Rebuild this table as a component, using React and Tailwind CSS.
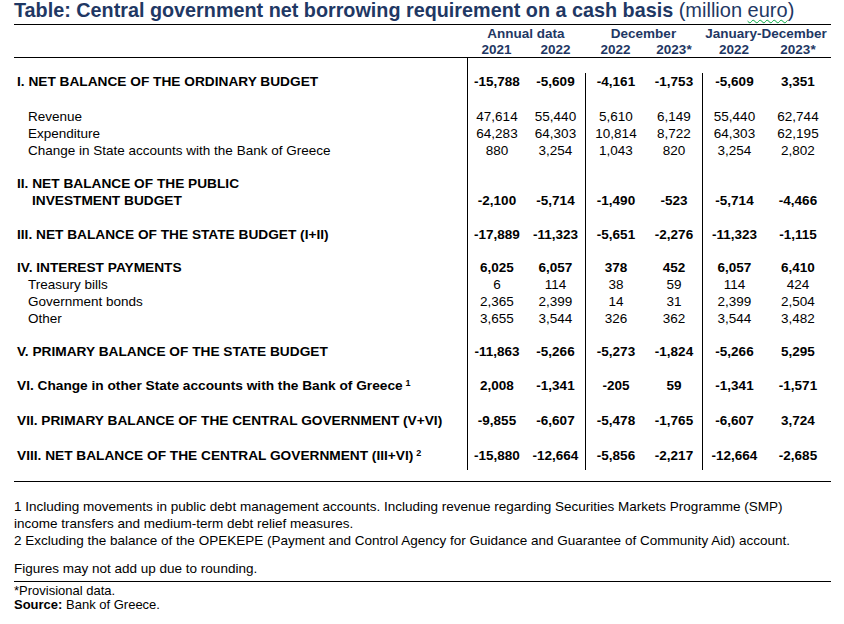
const GRID = 'grid grid-cols-[453px_59px_59px_61px_56px_64px_64px]';

const rows = [
  { label: 'I. NET BALANCE OF THE ORDINARY BUDGET', values: ['-15,788', '-5,609', '-4,161', '-1,753', '-5,609', '3,351'], bold: true, h: 'h-[17px]' },
  { label: 'Revenue', values: ['47,614', '55,440', '5,610', '6,149', '55,440', '62,744'], h: 'h-[35px]' },
  { label: 'Expenditure', values: ['64,283', '64,303', '10,814', '8,722', '64,303', '62,195'], h: 'h-[17px]' },
  { label: 'Change in State accounts with the Bank of Greece', values: ['880', '3,254', '1,043', '820', '3,254', '2,802'], h: 'h-[17px]' },
  { label: 'II. NET BALANCE OF THE PUBLIC', label2: 'INVESTMENT BUDGET', values: ['-2,100', '-5,714', '-1,490', '-523', '-5,714', '-4,466'], bold: true, h: 'h-[50px]' },
  { label: 'III. NET BALANCE OF THE STATE BUDGET (I+II)', values: ['-17,889', '-11,323', '-5,651', '-2,276', '-11,323', '-1,115'], bold: true, h: 'h-[34px]' },
  { label: 'IV. INTEREST PAYMENTS', values: ['6,025', '6,057', '378', '452', '6,057', '6,410'], bold: true, h: 'h-[33px]' },
  { label: 'Treasury bills', values: ['6', '114', '38', '59', '114', '424'], h: 'h-[17px]' },
  { label: 'Government bonds', values: ['2,365', '2,399', '14', '31', '2,399', '2,504'], h: 'h-[17px]' },
  { label: 'Other', values: ['3,655', '3,544', '326', '362', '3,544', '3,482'], h: 'h-[17px]' },
  { label: 'V. PRIMARY BALANCE OF THE STATE BUDGET', values: ['-11,863', '-5,266', '-5,273', '-1,824', '-5,266', '5,295'], bold: true, h: 'h-[33px]' },
  { label: 'VI. Change in other State accounts with the Bank of Greece', note: '1', values: ['2,008', '-1,341', '-205', '59', '-1,341', '-1,571'], bold: true, h: 'h-[34px]' },
  { label: 'VII. PRIMARY BALANCE OF THE CENTRAL GOVERNMENT (V+VI)', values: ['-9,855', '-6,607', '-5,478', '-1,765', '-6,607', '3,724'], bold: true, h: 'h-[35px]' },
  { label: 'VIII. NET BALANCE OF THE CENTRAL GOVERNMENT (III+VI)', note: '2', values: ['-15,880', '-12,664', '-5,856', '-2,217', '-12,664', '-2,685'], bold: true, h: 'h-[35px]' },
];

const Row = ({ row }) => (
  <div className={`${GRID} ${row.h} leading-[17px]`}>
    <div className={`flex flex-col justify-end ${row.bold ? 'pl-[3px] font-bold text-[13.7px]' : 'pl-[14px]'}`}>
      <div className="whitespace-nowrap">
        {row.label}
        {row.note && <sup className="ml-[3px] text-[9px] font-bold">{row.note}</sup>}
      </div>
      {row.label2 && <div className="pl-[15px] whitespace-nowrap">{row.label2}</div>}
    </div>
    {row.values.map((v, i) => (
      <div
        key={i}
        className={`flex items-end justify-center ${row.bold ? 'font-bold' : ''} ${i === 0 || i === 2 || i === 4 ? 'border-l border-black' : ''}`}
      >
        {v}
      </div>
    ))}
  </div>
);

const Spacer = ({ h, all }) => (
  <div className={`${GRID} ${h}`}>
    <div></div>
    <div className="border-l border-black"></div>
    <div></div>
    <div className={all ? 'border-l border-black' : ''}></div>
    <div></div>
    <div className={all ? 'border-l border-black' : ''}></div>
    <div></div>
  </div>
);

export default function App() {
  return (
    <div className="w-[844px] h-[624px] bg-white font-['Liberation_Sans',Arial,sans-serif] text-black overflow-hidden">
      <div className="ml-[14px] w-[817px]">
        {/* title */}
        <div className="h-[25px] border-b border-black text-[#1f3864] leading-[21px] whitespace-nowrap">
          <span className="text-[19.8px] font-bold">Table: Central government net borrowing requirement on a cash basis</span>
          <span className="text-[20px]"> (million <span className="underline decoration-wavy decoration-green-600 decoration-1 underline-offset-2">euro</span>)</span>
        </div>

        {/* column heads */}
        <div className="border-b border-black text-[13.5px] font-bold text-[#1f3864]">
          <div className="grid grid-cols-[453px_118px_117px_128px] h-[17px] leading-[17px]">
            <div></div>
            <div className="text-center">Annual data</div>
            <div className="text-center">December</div>
            <div className="text-center">January-December</div>
          </div>
          <div className={`${GRID} h-[15px] leading-[15px]`}>
            <div></div>
            <div className="text-center">2021</div>
            <div className="text-center">2022</div>
            <div className="text-center">2022</div>
            <div className="text-center">2023*</div>
            <div className="text-center">2022</div>
            <div className="text-center">2023*</div>
          </div>
        </div>

        {/* body */}
        <div className="text-[13.5px]">
          <Spacer h="h-[15px]" />
          {rows.map((r, i) => (
            <Row key={i} row={r} />
          ))}
          <Spacer h="h-[6px]" all />
        </div>
        <div className="h-[12px] border-b border-black"></div>

        {/* notes */}
        <div className="pt-[16px] text-[13.5px] leading-[17px] whitespace-nowrap">
          <div>1 Including movements in public debt management accounts. Including revenue regarding Securities Markets Programme (SMP)</div>
          <div>income transfers and medium-term debt relief measures.</div>
          <div>2 Excluding the balance of the OPEKEPE (Payment and Control Agency for Guidance and Guarantee of Community Aid) account.</div>
          <div className="mt-[11px] border-b border-black pb-[4px]">Figures may not add up due to rounding.</div>
          <div className="pt-[2px] text-[13px] leading-[14px]">
            <div>*Provisional data.</div>
            <div>
              <span className="font-bold">Source:</span> Bank of Greece.
            </div>
          </div>
        </div>
      </div>
    </div>
  );
}
